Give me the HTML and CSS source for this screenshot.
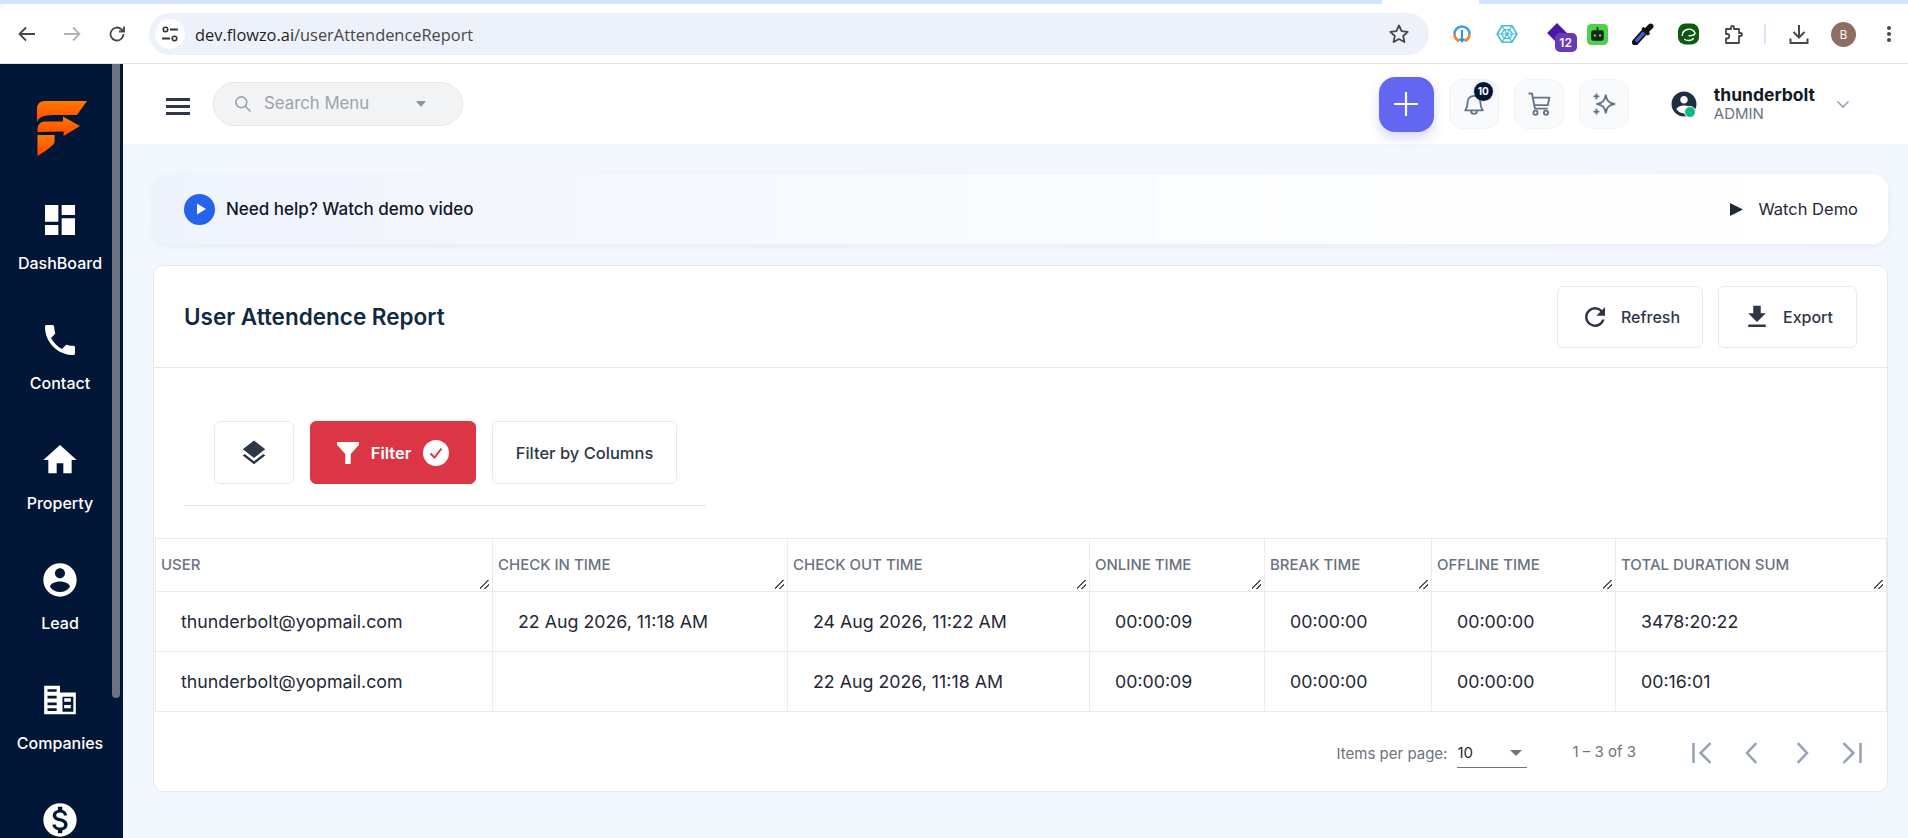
FILE: index.html

```html
<!DOCTYPE html>
<html>
<head>
  <meta charset="utf-8">
  <link rel="stylesheet" href="styles.css">
</head>
<body>
  <!-- browser chrome -->
  <div class="tab-strip"><div class="active-tab"></div></div>
  <div class="toolbar">
    <div class="nav-btn"><svg viewBox="0 0 24 24" width="24" height="24"><path d="M20 12H5M11 5.5L4.5 12l6.5 6.5" fill="none" stroke="#474747" stroke-width="1.8"/></svg></div>
    <div class="nav-btn"><svg viewBox="0 0 24 24" width="24" height="24"><path d="M4 12h15M13 5.5l6.5 6.5-6.5 6.5" fill="none" stroke="#b0b3b8" stroke-width="1.8"/></svg></div>
    <div class="nav-btn"><svg viewBox="0 0 24 24" width="24" height="24"><path d="M18.5 12a6.5 6.5 0 1 1-2-4.7L19 9.5M19 4.5v5h-5" fill="none" stroke="#474747" stroke-width="1.8"/></svg></div>
    <div class="omnibox">
      <div class="site-info">
        <svg viewBox="0 0 16 16" width="18" height="18"><circle cx="4" cy="4" r="2" fill="none" stroke="#333" stroke-width="1.4"/><path d="M8 4h7M1 12h7" stroke="#333" stroke-width="1.6"/><circle cx="12" cy="12" r="2" fill="none" stroke="#333" stroke-width="1.4"/></svg>
      </div>
      <div class="url"><span class="url-host">dev.flowzo.ai</span>/userAttendenceReport</div>
      <svg class="star" viewBox="0 0 24 24" width="24" height="24"><path d="M12 3.5l2.6 5.6 6.1.7-4.5 4.2 1.2 6L12 17l-5.4 3 1.2-6-4.5-4.2 6.1-.7z" fill="none" stroke="#474747" stroke-width="1.8" stroke-linejoin="round"/></svg>
    </div>
    <div class="ext-row">
      <div class="ext"><svg viewBox="0 0 20 20" width="20" height="22"><path d="M2.5 10a7.5 7.5 0 0 1 15 0" fill="none" stroke="#3b9cf0" stroke-width="2.6"/><path d="M2.5 10a7.5 7.5 0 0 0 5 7M17.5 10a7.5 7.5 0 0 1-5 7" fill="none" stroke="#f57c34" stroke-width="2.6"/><path d="M10 6v11" stroke="#2f8fe6" stroke-width="2"/><path d="M6.5 14.5L10 19l3.500-4.500z" fill="#2f8fe6"/></svg></div>
      <div class="ext"><svg viewBox="0 0 20 20" width="22" height="22" fill="none" stroke="#45bfd6" stroke-width="1.1"><path d="M5.500 2.500h9L19 10l-4.500 7.500h-9L1 10z" stroke-width="1.5"/><path d="M7.500 6h5L15 10l-2.500 4h-5L5 10zM1 10h18M5.500 2.500l9 15M14.500 2.500l-9 15"/></svg></div>
      <div class="ext ext-badged">
        <svg viewBox="0 0 20 20" width="22" height="22"><path d="M10 1l9 9-9 9-9-9z" fill="#4a17a8"/></svg>
        <span class="ext-count">12</span>
      </div>
      <div class="ext"><svg viewBox="0 0 20 20" width="21" height="21"><rect width="20" height="20" rx="4" fill="#4fd04a"/><path d="M10 3v3" stroke="#12261a" stroke-width="1.6"/><rect x="4" y="6" width="12" height="10" rx="2" fill="#12261a"/><circle cx="7.500" cy="11" r="1.200" fill="#4fd04a"/><circle cx="12.500" cy="11" r="1.200" fill="#4fd04a"/></svg></div>
      <div class="ext"><svg viewBox="0 0 20 20" width="22" height="22"><path d="M3 17.500L11.500 8" stroke="#111" stroke-width="6" stroke-linecap="round"/><path d="M3.500 17L11 8.500" stroke="#3f63c9" stroke-width="3"/><path d="M9.500 4.500l6 6" stroke="#111" stroke-width="3"/><path d="M13 7l4-4" stroke="#111" stroke-width="5" stroke-linecap="round"/></svg></div>
      <div class="ext"><svg viewBox="0 0 20 20" width="21" height="22"><rect width="20" height="20" rx="7" fill="#0f5a12"/><path d="M4 12a6.500 6.500 0 0 1 12-3.500c1 2.500-3 3.500-6 3M6 15c3 2 7 1.500 9-1" fill="none" stroke="#fff" stroke-width="1.300"/></svg></div>
      <div class="ext"><svg viewBox="0 0 24 24" width="24" height="24"><path d="M5 7h5V5.500a1.500 1.500 0 0 1 3 0V7h5v4h1.500a1.500 1.500 0 0 1 0 3H18v7H5v-4.500h1a2.200 2.200 0 0 0 0-4.500H5z" fill="none" stroke="#474747" stroke-width="1.800" stroke-linejoin="round"/></svg></div>
      <div class="ext-divider"></div>
      <div class="ext"><svg viewBox="0 0 24 24" width="24" height="24"><path d="M12 3v12M6.500 10l5.500 5.500 5.500-5.500M3.500 16.500V21h17v-4.500" fill="none" stroke="#474747" stroke-width="2"/></svg></div>
      <div class="profile-pic">B</div>
      <div class="chrome-menu"><i></i><i></i><i></i></div>
    </div>
  </div>

  <div class="app">
    <aside class="sidebar">
      <div class="scroll-thumb"></div>
      <div class="logo">
        <svg viewBox="0 0 51 55" width="51" height="55">
          <defs>
            <linearGradient id="logoFill" x1="0" y1="0" x2="0" y2="1">
              <stop offset="0" stop-color="#ff7a00"/>
              <stop offset="1" stop-color="#ff4500"/>
            </linearGradient>
          </defs>
          <path d="M0 21V8Q0 0 8 0H50L40 14H16Q2 14 0 21z" fill="url(#logoFill)"/>
          <path d="M0.500 31V28Q1 21 8 20.600H26V15.600L43 25 26.600 35V30.600z" fill="url(#logoFill)"/>
          <path d="M0.500 34H17.600V41Q17 45 0.500 55z" fill="url(#logoFill)"/>
        </svg>
      </div>
      <nav class="side-nav">
        <a class="side-item"><svg viewBox="0 0 24 24"><path d="M3 13h8V3H3v10zm0 8h8v-6H3v6zm10 0h8V11h-8v10zm0-18v6h8V3h-8z"/></svg><span>DashBoard</span></a>
        <a class="side-item"><svg viewBox="0 0 24 24"><path d="M6.620 10.790c1.440 2.830 3.760 5.140 6.590 6.590l2.200-2.200c.27-.27.67-.36 1.020-.24 1.120.37 2.330.57 3.570.57.55 0 1 .45 1 1V20c0 .55-.45 1-1 1-9.390 0-17-7.610-17-17 0-.55.45-1 1-1h3.500c.55 0 1 .45 1 1 0 1.250.2 2.450.57 3.570.11.35.03.74-.25 1.020l-2.200 2.200z"/></svg><span>Contact</span></a>
        <a class="side-item"><svg viewBox="0 0 24 24"><path d="M10 20v-6h4v6h5v-8h3L12 3 2 12h3v8z"/></svg><span>Property</span></a>
        <a class="side-item"><svg viewBox="0 0 24 24"><path d="M12 2C6.480 2 2 6.480 2 12s4.480 10 10 10 10-4.480 10-10S17.520 2 12 2zm0 3c1.660 0 3 1.340 3 3s-1.340 3-3 3-3-1.340-3-3 1.340-3 3-3zm0 14.200c-2.500 0-4.710-1.280-6-3.220.03-1.990 4-3.080 6-3.080 1.990 0 5.970 1.090 6 3.080-1.290 1.940-3.500 3.220-6 3.220z"/></svg><span>Lead</span></a>
        <a class="side-item"><svg viewBox="0 0 24 24" fill-rule="evenodd"><path d="M2.500 3.500H12V7.500h9.500V20.500H2.500zM4.500 5.500h5.500v1.600H4.500zM4.500 9.500h5.500v1.600H4.500zM4.500 13.500h5.500v1.600H4.500zM4.500 17h5.500v1.600H4.500zM13.500 10h6.500v9h-6.500zM14.500 11h4v2h-4zM14.500 15h4v2h-4z"/></svg><span>Companies</span></a>
        <a class="side-item"><svg viewBox="0 0 24 24"><path d="M12 2C6.480 2 2 6.480 2 12s4.480 10 10 10 10-4.480 10-10S17.520 2 12 2zm1.410 16.090V20h-2.670v-1.930c-1.710-.36-3.160-1.460-3.270-3.400h1.960c.1 1.050.82 1.870 2.650 1.870 1.960 0 2.400-.98 2.400-1.590 0-.83-.44-1.610-2.670-2.140-2.480-.6-4.180-1.620-4.180-3.670 0-1.720 1.390-2.840 3.110-3.210V4h2.670v1.950c1.860.45 2.790 1.860 2.850 3.390H14.300c-.05-1.110-.64-1.870-2.220-1.870-1.500 0-2.400.68-2.400 1.640 0 .84.65 1.390 2.670 1.910s4.180 1.390 4.180 3.910c-.01 1.830-1.380 2.830-3.120 3.160z"/></svg></a>
      </nav>
    </aside>

    <div class="main">
      <header class="topbar">
        <div class="hamburger"><i></i><i></i><i></i></div>
        <div class="search-pill">
          <svg viewBox="0 0 24 24" width="20" height="20"><circle cx="10" cy="10" r="6.500" fill="none" stroke="#9ca3af" stroke-width="2"/><path d="M15 15l6 6" stroke="#9ca3af" stroke-width="2"/></svg>
          <span class="search-text">Search Menu</span>
          <span class="search-caret"></span>
        </div>
        <div class="topbar-right">
          <button class="add-btn"><svg viewBox="0 0 24 24" width="26" height="26"><path d="M12 1v22M1 12h22" stroke="#fff" stroke-width="2"/></svg></button>
          <button class="tool-btn">
            <svg viewBox="0 0 24 24" width="28" height="28"><path d="M4.500 17.500c1.500-2 2-3 2-7a5.500 5.500 0 0 1 11 0c0 4 .5 5 2 7zM9.500 18a2.500 2.500 0 0 0 5 0" fill="none" stroke="#64748b" stroke-width="1.600" stroke-linejoin="round"/></svg>
            <span class="notif-badge">10</span>
          </button>
          <button class="tool-btn"><svg viewBox="0 0 24 24" width="28" height="28"><path d="M3 3h3l2.500 13h11M7 6.500h14l-1.500 6.500H8" fill="none" stroke="#64748b" stroke-width="1.600" stroke-linejoin="round"/><circle cx="9" cy="19.500" r="1.800" fill="none" stroke="#64748b" stroke-width="1.600"/><circle cx="18" cy="19.500" r="1.800" fill="none" stroke="#64748b" stroke-width="1.600"/></svg></button>
          <button class="tool-btn"><svg viewBox="0 0 24 24" width="28" height="28"><path d="M13.500 4.500c1 5 2.500 6.500 7.500 7.500-5 1-6.500 2.500-7.500 7.500-1-5-2.500-6.500-7.500-7.500 5-1 6.500-2.500 7.500-7.500z" fill="none" stroke="#64748b" stroke-width="1.600" stroke-linejoin="round"/><path d="M5.500 3v5M3 5.500h5M5.500 16v5M3 18.500h5" stroke="#64748b" stroke-width="1.600"/></svg></button>
          <div class="user-box">
            <div class="user-icon">
              <svg viewBox="0 0 24 24" width="30" height="30"><path d="M12 2C6.480 2 2 6.480 2 12s4.480 10 10 10 10-4.480 10-10S17.520 2 12 2zm0 3.500c1.660 0 3 1.340 3 3s-1.340 3-3 3-3-1.340-3-3 1.340-3 3-3zm0 14c-2.500 0-4.710-1.280-6-3.220.03-1.990 4-3.080 6-3.080 1.990 0 5.970 1.090 6 3.080-1.290 1.940-3.500 3.220-6 3.220z" fill="#1f2e45"/></svg>
              <span class="online-dot"></span>
            </div>
            <div class="user-text">
              <div class="user-name">thunderbolt</div>
              <div class="user-role">ADMIN</div>
            </div>
            <svg class="user-chevron" viewBox="0 0 16 16" width="16" height="16"><path d="M2.500 5.500L8 11l5.500-5.500" fill="none" stroke="#94a3b8" stroke-width="1.600"/></svg>
          </div>
        </div>
      </header>

      <div class="content">
        <div class="help-banner">
          <div class="help-left">
            <span class="play-dot"><svg viewBox="0 0 12 12" width="12" height="12"><path d="M2 .5v11L11 6z" fill="#fff"/></svg></span>
            <span class="help-text">Need help? Watch demo video</span>
          </div>
          <div class="help-right">
            <svg viewBox="0 0 12 12" width="13" height="13"><path d="M0 0v12l12-6z" fill="#1f2937"/></svg>
            <span>Watch Demo</span>
          </div>
        </div>

        <section class="card">
          <div class="card-head">
            <h1 class="card-title">User Attendence Report</h1>
            <div class="card-actions">
              <button class="btn btn-refresh"><svg viewBox="0 0 24 24" width="30" height="30"><path d="M17.650 6.350A7.960 7.960 0 0 0 12 4a8 8 0 1 0 7.730 10h-2.080A6 6 0 1 1 12 6c1.660 0 3.140.69 4.220 1.780L13 11h7V4l-2.350 2.350z" fill="#2d3748"/></svg>Refresh</button>
              <button class="btn btn-export"><svg viewBox="0 0 24 24" width="30" height="30"><path d="M19 9h-4V3H9v6H5l7 7 7-7zM5 18v2h14v-2H5z" fill="#2d3748"/></svg>Export</button>
            </div>
          </div>

          <div class="filters">
            <div class="filter-row">
              <button class="btn btn-layers"><svg viewBox="0 0 24 24" width="30" height="30"><path d="M11.990 18.540l-7.370-5.730L3 14.070l9 7 9-7-1.630-1.270-7.380 5.740zM12 16l7.360-5.730L21 9l-9-7-9 7 1.630 1.270L12 16z" fill="#2d3748"/></svg></button>
              <button class="btn btn-filter">
                <svg viewBox="0 0 20 20" width="22" height="22"><path d="M0 0h20v2.500L12.500 11v9h-5v-9L0 2.500z" fill="#fff"/></svg>
                <span>Filter</span>
                <svg viewBox="0 0 26 26" width="26" height="26"><circle cx="13" cy="13" r="13" fill="#fff"/><path d="M7.500 13.500l4 4 7-9" fill="none" stroke="#dc3545" stroke-width="2"/></svg>
              </button>
              <button class="btn btn-columns">Filter by Columns</button>
            </div>
            <div class="filter-rule"></div>
          </div>

          <table class="report">
            <thead>
              <tr>
                <th class="col-user">USER<i class="grip"></i></th>
                <th class="col-in">CHECK IN TIME<i class="grip"></i></th>
                <th class="col-out">CHECK OUT TIME<i class="grip"></i></th>
                <th class="col-online">ONLINE TIME<i class="grip"></i></th>
                <th class="col-break">BREAK TIME<i class="grip"></i></th>
                <th class="col-offline">OFFLINE TIME<i class="grip"></i></th>
                <th class="col-total">TOTAL DURATION SUM<i class="grip"></i></th>
              </tr>
            </thead>
            <tbody>
              <tr>
                <td>thunderbolt@yopmail.com</td>
                <td>22 Aug 2026, 11:18 AM</td>
                <td>24 Aug 2026, 11:22 AM</td>
                <td>00:00:09</td>
                <td>00:00:00</td>
                <td>00:00:00</td>
                <td>3478:20:22</td>
              </tr>
              <tr>
                <td>thunderbolt@yopmail.com</td>
                <td></td>
                <td>22 Aug 2026, 11:18 AM</td>
                <td>00:00:09</td>
                <td>00:00:00</td>
                <td>00:00:00</td>
                <td>00:16:01</td>
              </tr>
            </tbody>
          </table>

          <div class="pager">
            <span class="pager-label">Items per page:</span>
            <div class="pager-select"><span>10</span><i class="pager-caret"></i></div>
            <span class="pager-range">1 – 3 of 3</span>
            <div class="pager-btns">
              <button class="page-btn"><svg viewBox="0 0 24 24" width="34" height="34"><path d="M6 5v14M18 5l-7 7 7 7" fill="none" stroke="#94a3b8" stroke-width="1.800"/></svg></button>
              <button class="page-btn"><svg viewBox="0 0 24 24" width="34" height="34"><path d="M15 5l-6.500 7 6.500 7" fill="none" stroke="#94a3b8" stroke-width="1.800"/></svg></button>
              <button class="page-btn"><svg viewBox="0 0 24 24" width="34" height="34"><path d="M9 5l6.500 7-6.500 7" fill="none" stroke="#94a3b8" stroke-width="1.800"/></svg></button>
              <button class="page-btn"><svg viewBox="0 0 24 24" width="34" height="34"><path d="M18 5v14M6 5l7 7-7 7" fill="none" stroke="#94a3b8" stroke-width="1.800"/></svg></button>
            </div>
          </div>
        </section>
      </div>
    </div>
  </div>
</body>
</html>
```

FILE: styles.css

```css
* {
  box-sizing: border-box;
}

html, body {
  margin: 0;
  height: 838px;
  overflow: hidden;
}

body {
  display: flex;
  flex-direction: column;
  font-family: Inter, "Noto Sans", sans-serif;
  background: #f3f7fe;
  color: #1f2937;
}

button {
  font-family: inherit;
  cursor: pointer;
}

/* browser chrome */
.tab-strip {
  height: 4px;
  background: #d3e3fd;
  flex: none;
}

.active-tab {
  width: 97px;
  height: 4px;
  margin-left: 1382px;
  background: #fff;
}

.toolbar {
  height: 60px;
  flex: none;
  display: flex;
  align-items: center;
  background: #fff;
  border-bottom: 1px solid #dfe1e5;
  border-top-left-radius: 8px;
  padding: 1px 0 0 4px;
}

.nav-btn {
  width: 45px;
  display: flex;
  justify-content: center;
}

.omnibox {
  width: 1280px;
  height: 42px;
  margin-left: 10px;
  display: flex;
  align-items: center;
  background: #edf2fa;
  border-radius: 21px;
  padding: 0 18px 0 6px;
}

.site-info {
  width: 30px;
  height: 30px;
  border-radius: 50%;
  background: #fff;
  display: flex;
  align-items: center;
  justify-content: center;
}

.url {
  margin-left: 10px;
  font-family: "Open Sans", sans-serif;
  font-size: 16.400px;
  color: #474747;
}

.url-host {
  color: #1f1f1f;
}

.star {
  margin-left: auto;
}

.ext-row {
  display: flex;
  align-items: center;
  margin-left: 10px;
}

.ext {
  width: 45.300px;
  height: 30px;
  display: flex;
  align-items: center;
  justify-content: center;
  position: relative;
}

.ext-badged svg {
  margin: -2px 0 0 10px;
}

.ext-count {
  position: absolute;
  left: 25px;
  top: 14px;
  width: 22px;
  height: 19px;
  border-radius: 5px;
  background: #673ab7;
  color: #fff;
  font-size: 12px;
  font-weight: 600;
  line-height: 19px;
  text-align: center;
}

.ext-divider {
  width: 2px;
  height: 20px;
  margin: 0 10px 0 8px;
  background: #d3e3fd;
}

.profile-pic {
  width: 25px;
  height: 25px;
  margin-left: 9.500px;
  border-radius: 50%;
  background: #8d6e63;
  color: #fff;
  font-family: "Open Sans", sans-serif;
  font-size: 12px;
  line-height: 25px;
  text-align: center;
}

.chrome-menu {
  margin-left: 31.500px;
  display: flex;
  flex-direction: column;
  gap: 2px;
}

.chrome-menu i {
  width: 4px;
  height: 4px;
  border-radius: 50%;
  background: #474747;
}

/* app shell */
.app {
  flex: 1;
  display: flex;
  min-height: 0;
}

.sidebar {
  width: 123px;
  flex: none;
  position: relative;
  background: #021737;
  overflow: hidden;
}

.scroll-thumb {
  position: absolute;
  left: 112px;
  top: 0;
  width: 8px;
  height: 634px;
  background: #6b7280;
  border-radius: 0 0 4px 4px;
}

.logo {
  width: 120px;
  padding-top: 37px;
  padding-left: 37px;
  height: 136px;
}

.side-nav {
  width: 120px;
  display: flex;
  flex-direction: column;
}

.side-item {
  height: 120px;
  flex: none;
  display: flex;
  flex-direction: column;
  align-items: center;
  color: #fff;
  font-size: 16px;
  font-weight: 500;
  line-height: 20px;
}

.side-item svg {
  width: 40px;
  height: 40px;
  fill: #fff;
  margin-bottom: 13px;
  flex: none;
}

.main {
  flex: 1;
  min-width: 0;
  display: flex;
  flex-direction: column;
}

/* top bar */
.topbar {
  height: 80px;
  flex: none;
  display: flex;
  align-items: center;
  background: #fff;
  padding: 0 57px 0 43px;
}

.hamburger {
  width: 24px;
  display: flex;
  flex-direction: column;
  gap: 4px;
  margin-top: 4px;
}

.hamburger i {
  height: 3px;
  background: #2d3748;
}

.search-pill {
  width: 250px;
  height: 44px;
  margin-left: 23px;
  display: flex;
  align-items: center;
  background: #f3f4f6;
  border: 1px solid #e5e7eb;
  border-radius: 22px;
  padding-left: 19px;
}

.search-text {
  margin-left: 11px;
  font-size: 16.800px;
  color: #9ca3af;
  padding-bottom: 2px;
}

.search-caret {
  margin-left: 47px;
  border: 5px solid transparent;
  border-top: 6px solid #8b93a1;
  border-bottom: 0;
}

.topbar-right {
  margin-left: auto;
  display: flex;
  align-items: center;
  gap: 15px;
}

.add-btn {
  width: 55px;
  height: 55px;
  border: 0;
  border-radius: 16px;
  background: #6366f1;
  box-shadow: 0 6px 12px rgba(99, 102, 241, 0.25);
  display: flex;
  align-items: center;
  justify-content: center;
}

.tool-btn {
  width: 50px;
  height: 50px;
  position: relative;
  background: #f9fafb;
  border: 1px solid #f1f3f6;
  border-radius: 14px;
  display: flex;
  align-items: center;
  justify-content: center;
  padding: 0;
}

.notif-badge {
  position: absolute;
  left: 24px;
  top: 2px;
  width: 19px;
  height: 19px;
  border-radius: 50%;
  background: #021737;
  color: #fff;
  font-size: 10px;
  font-weight: 700;
  line-height: 19px;
  text-align: center;
  box-shadow: 0 0 4px rgba(0, 0, 0, 0.15);
}

.user-box {
  margin-left: 25px;
  display: flex;
  align-items: center;
}

.user-icon {
  position: relative;
  width: 30px;
  height: 30px;
}

.online-dot {
  position: absolute;
  left: 15px;
  top: 17px;
  width: 12px;
  height: 12px;
  border-radius: 50%;
  background: #10b981;
  border: 1px solid #fff;
}

.user-text {
  margin-left: 15px;
}

.user-name {
  font-size: 17.500px;
  font-weight: 700;
  line-height: 20px;
  color: #111827;
}

.user-role {
  font-size: 15px;
  line-height: 18px;
  color: #6b7280;
}

.user-chevron {
  margin-left: 20px;
}

/* content */
.content {
  padding: 30px 20px 0 30px;
}

.help-banner {
  height: 70px;
  display: flex;
  align-items: center;
  justify-content: space-between;
  padding: 0 30px 0 31px;
  border-radius: 16px;
  background: linear-gradient(90deg, #eff3fc, #fcfdff 60%, #fff);
  box-shadow: 0 2px 6px rgba(148, 163, 184, 0.12);
}

.help-left, .help-right {
  display: flex;
  align-items: center;
}

.play-dot {
  width: 31px;
  height: 31px;
  border-radius: 50%;
  background: #2563eb;
  display: flex;
  align-items: center;
  justify-content: center;
  padding-left: 2px;
}

.help-text {
  margin-left: 11px;
  font-size: 17px;
  font-weight: 500;
  color: #111827;
}

.help-right {
  font-size: 16.500px;
  color: #1f2937;
  gap: 15px;
}

.card {
  margin-top: 21px;
  height: 527px;
  background: #fff;
  border: 1px solid #e2e8f0;
  border-radius: 10px;
  overflow: hidden;
}

.card-head {
  height: 102px;
  display: flex;
  align-items: center;
  justify-content: space-between;
  padding: 0 30px 0 30px;
  border-bottom: 1px solid #e5e7eb;
}

.card-title {
  margin: 0;
  font-size: 22.500px;
  font-weight: 600;
  color: #0f2a43;
}

.card-actions {
  display: flex;
  gap: 15px;
}

.btn {
  height: 62px;
  display: flex;
  align-items: center;
  justify-content: center;
  background: #fff;
  border: 1px solid #e5eaf3;
  border-radius: 6px;
  font-size: 16px;
  font-weight: 500;
  color: #2d3748;
  padding: 0;
}

.btn-refresh {
  width: 146px;
  gap: 11px;
}

.btn-export {
  width: 139px;
  gap: 11px;
}

.filters {
  height: 170px;
  padding: 53px 0 0 30px;
}

.filter-row {
  display: flex;
  gap: 16px;
  padding-left: 30px;
}

.btn-layers {
  width: 80px;
  height: 63px;
}

.btn-filter {
  width: 166px;
  height: 63px;
  background: #dc3545;
  border-color: #dc3545;
  color: #fff;
  font-size: 16.500px;
  font-weight: 600;
  gap: 12px;
}

.btn-columns {
  width: 185px;
  height: 63px;
  font-size: 16.500px;
}

.filter-rule {
  width: 522px;
  height: 1px;
  margin-top: 21px;
  background: #e5e7eb;
}

/* table */
.report {
  width: 1731px;
  margin-left: 1px;
  table-layout: fixed;
  border-collapse: collapse;
}

.report th, .report td {
  border: 1px solid #e9ecf1;
  text-align: left;
}

.report th {
  position: relative;
  height: 53px;
  padding: 0 7px 2px 5px;
  font-size: 15px;
  font-weight: 500;
  color: #6b7280;
  vertical-align: middle;
}

.report td {
  height: 60px;
  padding-left: 25px;
  font-size: 17.800px;
  color: #1f2937;
}

.col-user { width: 337px; }
.col-in { width: 295px; }
.col-out { width: 302px; }
.col-online { width: 175px; }
.col-break { width: 167px; }
.col-offline { width: 184px; }
.col-total { width: 271px; }

.grip {
  position: absolute;
  right: 3px;
  bottom: 2px;
  width: 9px;
  height: 9px;
  background: linear-gradient(135deg, transparent 40%, #555 40%, #555 52%, transparent 52%, transparent 68%, #555 68%, #555 80%, transparent 80%);
}

/* pagination */
.pager {
  display: flex;
  align-items: center;
  justify-content: flex-end;
  height: 50px;
  margin-top: 16px;
  padding-right: 10px;
  font-size: 15px;
  color: #6b7280;
}

.pager-select {
  width: 70px;
  height: 30px;
  margin: 0 45px 0 10px;
  display: flex;
  align-items: center;
  justify-content: space-between;
  border-bottom: 1px solid #6b7280;
  padding: 0 5px 0 0;
  color: #1f2937;
  font-size: 15px;
}

.pager-caret {
  border: 6px solid transparent;
  border-top: 6px solid #6b7280;
  border-bottom: 0;
  margin-right: 0;
}

.pager-range {
  margin: -4px 41px 0 0;
}

.pager-btns {
  display: flex;
}

.page-btn {
  width: 50px;
  height: 50px;
  border: 0;
  background: none;
  padding: 0;
  display: flex;
  align-items: center;
  justify-content: center;
}
```
